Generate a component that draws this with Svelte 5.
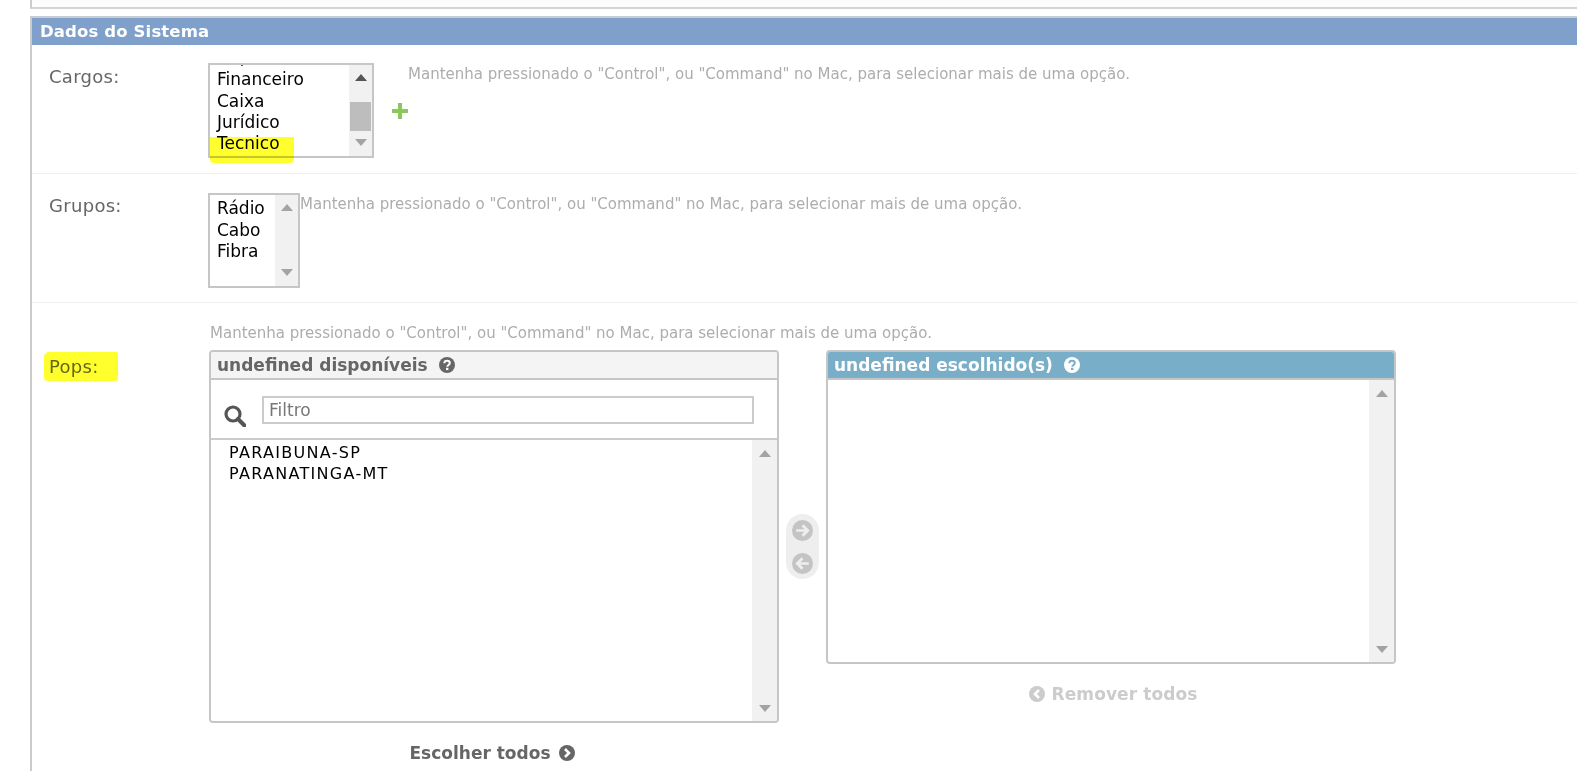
<script>
  const hint = 'Mantenha pressionado o "Control", ou "Command" no Mac, para selecionar mais de uma opção.';
  const cargos = ['Financeiro', 'Caixa', 'Jurídico', 'Tecnico'];
  const grupos = ['Rádio', 'Cabo', 'Fibra'];
  const pops = ['PARAIBUNA-SP', 'PARANATINGA-MT'];
</script>

{#snippet scrollbar(thumb = false)}
  <div class="bar">
    <svg class="arrow" viewBox="0 0 12 7" class:dark={thumb}><path d="M6 0 12 7H0z" /></svg>
    {#if thumb}<div class="thumb"></div>{/if}
    <svg class="arrow" viewBox="0 0 12 7"><path d="M0 0H12L6 7z" /></svg>
  </div>
{/snippet}

{#snippet question(color, mark)}
  <svg class="q" viewBox="0 0 16 16">
    <circle cx="8" cy="8" r="8" fill={color} />
    <path d="M5.3 6.2C5.4 4.6 6.6 3.8 8 3.8c1.6 0 2.8.9 2.8 2.3 0 1.9-2.5 1.9-2.5 3.6" fill="none" stroke={mark} stroke-width="2" />
    <rect x="7" y="10.8" width="2.4" height="2.3" fill={mark} />
  </svg>
{/snippet}

<div class="page">
  <div class="prev"></div>
  <section class="fieldset">
    <h2>Dados do Sistema</h2>

    <div class="row cargos">
      <span class="label">Cargos:</span>
      <div class="field">
        <div class="select wide">
          <div class="options end">
            {#each cargos as c}<div>{c}</div>{/each}
          </div>
          {@render scrollbar(true)}
        </div>
        <span class="plus">
          <svg viewBox="0 0 16 16"><path d="M6 0h4v6h6v4h-6v6H6v-6H0V6h6z" /></svg>
        </span>
        <p class="help">{hint}</p>
        <span class="mark mark-tec"></span>
      </div>
    </div>

    <div class="row grupos">
      <span class="label">Grupos:</span>
      <div class="field">
        <div class="select narrow">
          <div class="options">
            {#each grupos as g}<div>{g}</div>{/each}
          </div>
          {@render scrollbar()}
        </div>
        <p class="help flush">{hint}</p>
      </div>
    </div>

    <div class="row popsrow">
      <span class="label pops">Pops:<span class="mark mark-pops"></span></span>
      <div class="stack">
        <p class="help top">{hint}</p>
        <div class="selector">
          <div class="col">
            <div class="box tall">
              <div class="title">undefined disponíveis {@render question('#666', '#fff')}</div>
              <div class="filter">
                <svg class="search" viewBox="0 0 22 22">
                  <circle cx="9" cy="9" r="7" fill="none" stroke="#555" stroke-width="3.2" />
                  <path d="M14 14l6.5 6.5" stroke="#555" stroke-width="4" stroke-linecap="round" />
                </svg>
                <input placeholder="Filtro" />
              </div>
              <div class="list">
                <div class="items">
                  {#each pops as p}<div>{p}</div>{/each}
                </div>
                {@render scrollbar()}
              </div>
            </div>
            <div class="link active">
              Escolher todos
              <svg class="ic" viewBox="0 0 16 16"><circle cx="8" cy="8" r="8" fill="#666" /><path d="M6 4l4 4-4 4" fill="none" stroke="#fff" stroke-width="2.6" /></svg>
            </div>
          </div>

          <div class="movers">
            <svg viewBox="0 0 20 20"><circle cx="10" cy="10" r="10" fill="#c4c4c4" /><path d="M4 10h11M10 5l5 5-5 5" fill="none" stroke="#eee" stroke-width="2.6" /></svg>
            <svg viewBox="0 0 20 20"><circle cx="10" cy="10" r="10" fill="#c4c4c4" /><path d="M16 10H5M10 5l-5 5 5 5" fill="none" stroke="#eee" stroke-width="2.6" /></svg>
          </div>

          <div class="col">
            <div class="box short">
              <div class="title chosen">undefined escolhido(s) {@render question('#fff', '#79aec8')}</div>
              <div class="list">
                <div class="items"></div>
                {@render scrollbar()}
              </div>
            </div>
            <div class="link muted">
              <svg class="ic" viewBox="0 0 16 16"><circle cx="8" cy="8" r="8" fill="#ccc" /><path d="M10 4L6 8l4 4" fill="none" stroke="#fff" stroke-width="2.6" /></svg>
              Remover todos
            </div>
          </div>
        </div>
      </div>
    </div>
  </section>
</div>

<style>
  :global(html), :global(body) { margin: 0; background: #fff; overflow: hidden; }
  .page {
    height: 100vh;
    overflow: hidden;
    padding-left: 30px;
    font-family: "DejaVu Sans", Verdana, sans-serif;
    box-sizing: border-box;
  }
  .prev {
    height: 7px;
    border-left: 2px solid #ccc;
    border-bottom: 2px solid #d4d4d4;
    background: #fcfcfc;
    margin-bottom: 7px;
  }
  .fieldset {
    border-left: 2px solid #ccc;
    border-top: 2px solid #c6cbd4;
    height: 100%;
  }
  h2 {
    margin: 0;
    height: 27px;
    line-height: 28px;
    padding-left: 8px;
    background: #7ea0ca;
    color: #fff;
    font-size: 16.5px;
    font-weight: 700;
    letter-spacing: 0.13px;
  }
  .row { display: flex; border-bottom: 1px solid #eee; }
  .label {
    flex: 0 0 176px;
    box-sizing: border-box;
    padding-left: 17px;
    color: #666;
    font-size: 18px;
    line-height: 20px;
    letter-spacing: 0.3px;
  }
  .cargos { height: 129px; box-sizing: border-box; padding-top: 18px; }
  .cargos .label { padding-top: 4px; }
  .grupos { height: 129px; box-sizing: border-box; padding-top: 19px; }
  .grupos .label { padding-top: 3px; }
  .popsrow { border-bottom: 0; }
  .pops { padding-top: 54px; }
  .field { display: flex; align-items: flex-start; position: relative; }
  .select {
    display: flex;
    box-sizing: border-box;
    height: 95px;
    border: 2px solid #c6c6c6;
    background: #fff;
    overflow: hidden;
    position: relative;
  }
  .wide { width: 166px; }
  .narrow { width: 92px; }
  .options {
    flex: 1;
    height: 100%;
    padding: 3px 0 0 7px;
    box-sizing: border-box;
    color: #000;
    font-size: 17px;
    line-height: 21.5px;
    overflow: hidden;
    display: flex;
    flex-direction: column;
  }
  .options.end { justify-content: flex-end; padding-bottom: 1.5px; line-height: 21.3px; }
  .options.end::before {
    content: "";
    position: absolute;
    left: 31px;
    top: 0;
    width: 2px;
    height: 1px;
    background: #555;
  }
  .options > div { flex: none; }
  .bar {
    flex: 0 0 25px;
    display: flex;
    flex-direction: column;
    align-items: center;
    justify-content: space-between;
    background: #f1f1f1;
    padding: 10px 0 9px;
    box-sizing: border-box;
    position: relative;
  }
  .select .bar { flex-basis: 23px; padding: 9px 0 10px; }
  .arrow { width: 12px; height: 7px; fill: #a3a3a3; display: block; }
  .arrow.dark { fill: #555; }
  .thumb {
    position: absolute;
    left: 1px;
    right: 1px;
    top: 37px;
    height: 29px;
    background: #bdbdbd;
  }
  .plus { width: 16px; height: 16px; margin: 40px 0 0 18px; flex: none; }
  .plus svg { display: block; fill: #8dc65a; }
  .help {
    margin: 0;
    color: #adadad;
    font-size: 15px;
    line-height: 16px;
    white-space: nowrap;
  }
  .cargos .help { margin-top: 3px; }
  .help.flush { margin-top: 3px; }
  .stack { flex: 1; min-width: 0; }
  .help.top { margin: 22px 0 9px 2px; }
  .selector { display: flex; margin-left: 1px; align-items: flex-start; }
  .col { width: 570px; flex: none; }
  .box {
    display: flex;
    flex-direction: column;
    box-sizing: border-box;
    border: 2px solid #c6c6c6;
    border-radius: 4px;
    overflow: hidden;
    background: #fff;
  }
  .tall { height: 373px; }
  .short { height: 314px; }
  .title {
    flex: none;
    box-sizing: border-box;
    height: 28px;
    padding-left: 6px;
    display: flex;
    align-items: center;
    gap: 11px;
    background: #f4f4f4;
    border-bottom: 2px solid #c6c6c6;
    color: #666;
    font-size: 17px;
    font-weight: 700;
    white-space: nowrap;
  }
  .chosen { background: #79aec8; color: #fff; }
  .q { width: 16px; height: 16px; flex: none; }
  .filter {
    flex: none;
    box-sizing: border-box;
    height: 60px;
    padding: 16px 23px 0 13px;
    display: flex;
    align-items: flex-start;
    gap: 16px;
    border-bottom: 2px solid #ccc;
  }
  .search { width: 22px; height: 22px; margin-top: 9px; flex: none; }
  input {
    flex: 1;
    min-width: 0;
    box-sizing: border-box;
    height: 28px;
    border: 2px solid #ccc;
    border-radius: 0;
    outline: 0;
    padding: 0 5px;
    font: 17px "DejaVu Sans", sans-serif;
    background: #fff;
  }
  input::placeholder { color: #777; opacity: 1; }
  .list { flex: 1; display: flex; min-height: 0; }
  .items {
    flex: 1;
    padding: 3px 0 0 18px;
    color: #000;
    font-size: 16px;
    line-height: 20.5px;
    letter-spacing: 1.3px;
  }
  .movers {
    flex: none;
    box-sizing: border-box;
    width: 33px;
    height: 65px;
    margin: 164px 7px 0;
    padding: 6px 6px 5px;
    background: #eee;
    border-radius: 17px;
    display: flex;
    flex-direction: column;
    justify-content: space-between;
  }
  .movers svg { display: block; width: 21px; height: 21px; }
  .link {
    margin-top: 21px;
    height: 18px;
    display: flex;
    align-items: center;
    justify-content: center;
    gap: 8px;
    font-size: 17px;
    font-weight: 700;
    white-space: nowrap;
  }
  .link.active { color: #666; padding-right: 4px; }
  .link.muted { color: #ccc; gap: 7px; padding-left: 4px; letter-spacing: 0.1px; }
  .ic { width: 16px; height: 16px; flex: none; }
  .mark { position: absolute; background: #ffff2e; mix-blend-mode: multiply; pointer-events: none; }
  .mark-tec { left: 2px; top: 74px; width: 84px; height: 26px; border-radius: 0 0 4px 4px; }
  .pops { position: relative; }
  .mark-pops { left: 12px; top: 49px; width: 74px; height: 29px; border-radius: 5px 2px 3px 4px; }
</style>
